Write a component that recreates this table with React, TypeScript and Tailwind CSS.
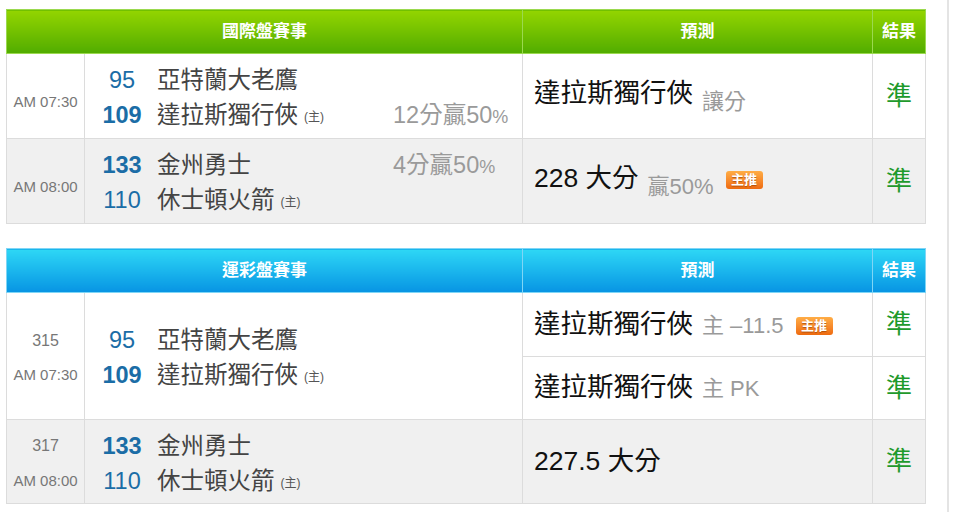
import type { ReactNode } from "react";

type Team = { no: string; name: string; bold?: boolean; home?: boolean; odds?: ReactNode };

const greenTh =
  "h-[44px] border border-[#9bd94f] bg-linear-to-b from-[#93d500] to-[#50ac00] text-[17px] font-semibold text-white";
const blueTh =
  "h-[44px] border border-[#7fd6f6] bg-linear-to-b from-[#2ed7f5] to-[#0894e3] text-[17px] font-semibold text-white";

function Odds({ pts }: { pts: string }) {
  return (
    <span>
      {pts}分贏50<span className="text-[18px]">%</span>
    </span>
  );
}

function TeamLine({ t }: { t: Team }) {
  return (
    <div className="grid h-[35px] grid-cols-[58px_242px_1fr] items-center">
      <span className={`text-center text-[23.5px] text-[#1b6da6] ${t.bold ? "font-bold" : ""}`}>{t.no}</span>
      <span className="whitespace-nowrap pl-[6px] text-[23.5px] text-[#444]">
        {t.name}
        {t.home && <span className="ml-[6px] align-[2px] text-[12px] text-[#555]">(主)</span>}
      </span>
      <span className="whitespace-nowrap text-[23.5px] text-[#9a9a9a]">{t.odds}</span>
    </div>
  );
}

function Teams({ a, b, span }: { a: Team; b: Team; span?: number }) {
  return (
    <td rowSpan={span} className="border border-[#dcdcdc] pl-[8px] pt-[4px] align-middle">
      <TeamLine t={a} />
      <TeamLine t={b} />
    </td>
  );
}

function Badge() {
  return (
    <span className="ml-[12px] inline-block h-[18px] w-[37px] rounded-[3px] bg-linear-to-b from-[#ffad45] to-[#ee6a0c] text-center align-[3px] text-[13px] font-bold leading-[18px] text-white [text-shadow:0_1px_1px_rgba(150,60,0,0.7)]">
      主推
    </span>
  );
}

function Pick({ main, sub, low, badge }: { main: string; sub?: string; low?: boolean; badge?: boolean }) {
  return (
    <td className="border border-[#dcdcdc] pl-[11px] align-middle whitespace-nowrap">
      <span className="text-[26.5px] text-[#111]">{main}</span>
      {sub && (
        <span className={`ml-[9px] text-[22px] text-[#9a9a9a] ${low ? "align-[-7px]" : ""}`}>{sub}</span>
      )}
      {badge && <Badge />}
    </td>
  );
}

function Hit() {
  return <td className="border border-[#dcdcdc] text-center text-[26px] text-[#1f9a2c]">準</td>;
}

function Time({ no, time, span }: { no?: string; time: string; span?: number }) {
  if (!no)
    return (
      <td className="border border-[#dcdcdc] pt-[12px] text-center text-[15px] text-[#777]">{time}</td>
    );
  return (
    <td rowSpan={span} className="border border-[#dcdcdc] pt-[4px] text-center text-[#777]">
      <div className="flex h-[35px] items-center justify-center text-[16px]">{no}</div>
      <div className="flex h-[35px] items-center justify-center text-[15px]">{time}</div>
    </td>
  );
}

function Cols() {
  return (
    <colgroup>
      <col className="w-[78px]" />
      <col className="w-[438px]" />
      <col className="w-[350px]" />
      <col className="w-[53px]" />
    </colgroup>
  );
}

export default function App() {
  return (
    <div className="flex h-[512px] bg-white font-['Liberation_Sans','Noto_Sans_CJK_TC',sans-serif]">
      <div className="w-[947px] pl-[6px] pt-[9px]">
        {/* 國際盤 */}
        <table className="w-[919px] table-fixed border-collapse">
          <Cols />
          <thead>
            <tr>
              <th colSpan={2} className={greenTh}>國際盤賽事</th>
              <th className={greenTh}>預測</th>
              <th className={greenTh}>結果</th>
            </tr>
          </thead>
          <tbody>
            <tr className="h-[85px] bg-white">
              <Time time="AM 07:30" />
              <Teams
                a={{ no: "95", name: "亞特蘭大老鷹" }}
                b={{ no: "109", name: "達拉斯獨行俠", bold: true, home: true, odds: <Odds pts="12" /> }}
              />
              <Pick main="達拉斯獨行俠" sub="讓分" low />
              <Hit />
            </tr>
            <tr className="h-[85px] bg-[#f0f0f0]">
              <Time time="AM 08:00" />
              <Teams
                a={{ no: "133", name: "金州勇士", bold: true, odds: <Odds pts="4" /> }}
                b={{ no: "110", name: "休士頓火箭", home: true }}
              />
              <Pick main="228 大分" sub="贏50%" low badge />
              <Hit />
            </tr>
          </tbody>
        </table>

        {/* 運彩盤 */}
        <table className="mt-[24px] w-[919px] table-fixed border-collapse">
          <Cols />
          <thead>
            <tr>
              <th colSpan={2} className={blueTh}>運彩盤賽事</th>
              <th className={blueTh}>預測</th>
              <th className={blueTh}>結果</th>
            </tr>
          </thead>
          <tbody>
            <tr className="h-[64px] bg-white">
              <Time no="315" time="AM 07:30" span={2} />
              <Teams
                span={2}
                a={{ no: "95", name: "亞特蘭大老鷹" }}
                b={{ no: "109", name: "達拉斯獨行俠", bold: true, home: true }}
              />
              <Pick main="達拉斯獨行俠" sub="主 –11.5" badge />
              <Hit />
            </tr>
            <tr className="h-[63px] bg-white">
              <Pick main="達拉斯獨行俠" sub="主 PK" />
              <Hit />
            </tr>
            <tr className="h-[84px] bg-[#f0f0f0]">
              <Time no="317" time="AM 08:00" />
              <Teams
                a={{ no: "133", name: "金州勇士", bold: true }}
                b={{ no: "110", name: "休士頓火箭", home: true }}
              />
              <Pick main="227.5 大分" />
              <Hit />
            </tr>
          </tbody>
        </table>
      </div>
      <div className="h-full w-[2px] bg-[#e4e4e4]" />
    </div>
  );
}
